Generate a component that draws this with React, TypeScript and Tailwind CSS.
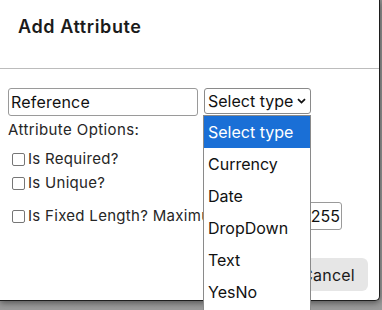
import React from "react";

const font = { fontFamily: "Inter, 'Liberation Sans', sans-serif" };

const CheckRow = ({ label, className = "" }: { label: string; className?: string }) => (
  <div className={`flex items-center gap-[3px] ${className}`}>
    <span className="ml-[4px] h-[13px] w-[13px] shrink-0 rounded-[2px] border border-[#767676] bg-white" />
    <span className="whitespace-nowrap text-[15px] leading-[18px] tracking-[0.3px] text-[#262626]">{label}</span>
  </div>
);

const options = ["Select type", "Currency", "Date", "DropDown", "Text", "YesNo"];

export default function App() {
  return (
    <div
      className="relative h-[310px] w-[382px] overflow-hidden bg-gradient-to-b from-[#8f8f8f] to-[#9b9b9b]"
      style={font}
    >
      {/* modal */}
      <div className="relative h-[301px] w-[380px] rounded-br-[5px] border-b border-r border-[#1e1e1e] bg-white shadow-[0_2px_6px_rgba(0,0,0,0.45)]">
        <div className="h-[69px] border-b border-[#bcbcbc] px-[18px] pt-[16px]">
          <h2 className="text-[18px] font-semibold leading-[22px] tracking-[0.6px] text-[#1b1b1b]">Add Attribute</h2>
        </div>

        <div className="px-[8px] pt-[19px]">
          <div className="flex items-start gap-[6px]">
            <div className="flex h-[28px] w-[190px] items-center rounded-[3px] border border-[#9a9a9a] px-[2px] text-[16px] tracking-[0.2px] text-[#111]">
              Reference
            </div>
            <div className="flex h-[26px] w-[107px] items-center justify-between rounded-[3px] border border-[#8a8a8a] pl-[3px] pr-[4px] text-[16px] text-[#111]">
              <span>Select type</span>
              <svg width="9" height="6" viewBox="0 0 9 6">
                <path d="M1 1.2 4.5 4.6 8 1.2" fill="none" stroke="#111" strokeWidth="1.8" />
              </svg>
            </div>
          </div>

          <div className="mt-[5px] text-[15px] leading-[18px] tracking-[0.4px] text-[#262626]">Attribute Options:</div>

          <CheckRow label="Is Required?" className="mt-[11px]" />
          <CheckRow label="Is Unique?" className="mt-[6px]" />

          <div className="mt-[10px] flex items-center">
            <CheckRow label="Is Fixed Length? Maximum Length:" />
            <div className="ml-auto mr-[29px] flex h-[28px] w-[40px] items-center justify-end rounded-[3px] border border-[#9a9a9a] pr-[1px] text-[16px] text-[#111]">
              255
            </div>
          </div>

          <div className="mt-[28px] flex justify-end pr-[3px]">
            <button className="h-[33px] w-[80px] rounded-[6px] bg-[#e6e6e6] text-[16px] tracking-[0.2px] text-[#1a1a1a]">
              Cancel
            </button>
          </div>
        </div>
      </div>

      {/* open select list */}
      <ul className="absolute left-[203px] top-[115px] h-[200px] w-[108px] border border-[#8a8a8a] bg-white">
        {options.map((o, i) => (
          <li
            key={o}
            className={`flex h-[32px] items-center pl-[4px] text-[16px] ${
              i === 0 ? "bg-[#1a6fd6] text-white" : "text-[#111]"
            }`}
          >
            {o}
          </li>
        ))}
      </ul>
    </div>
  );
}
